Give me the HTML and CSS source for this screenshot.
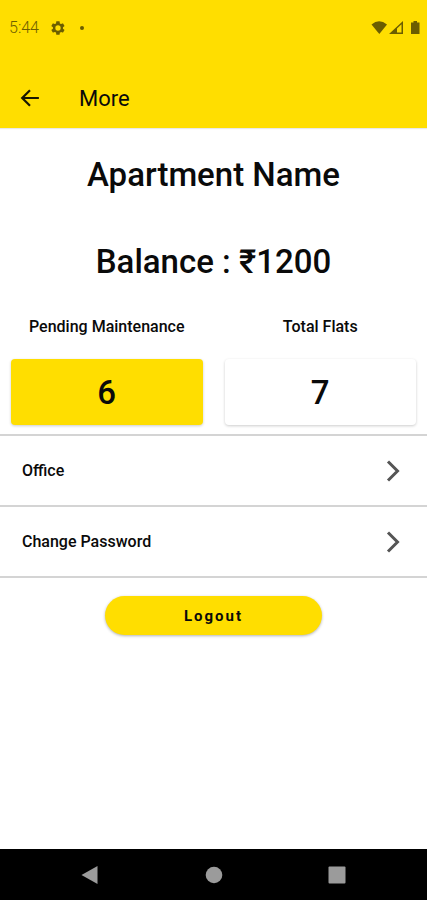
FILE: index.html
```html
<!DOCTYPE html>
<html lang="en">
<head>
<meta charset="utf-8">
<meta name="viewport" content="width=device-width, initial-scale=1">
<title>More</title>
<link rel="stylesheet" href="styles.css">
</head>
<body>
<div class="status">
  <span class="time">5:44</span>
  <svg class="gear" viewBox="0 0 24 24" aria-hidden="true"><path fill-rule="evenodd" d="M19.4 13c0-.3.1-.6.1-1s0-.7-.1-1l2.1-1.600c.2-.2.2-.4.1-.6l-2-3.500c-.1-.2-.4-.3-.6-.2l-2.500 1c-.5-.4-1.100-.7-1.700-1l-.4-2.700c0-.2-.2-.4-.5-.4h-4c-.2 0-.4.2-.5.4L9 5.100c-.6.2-1.200.6-1.700 1l-2.500-1c-.2-.1-.5 0-.6.2l-2 3.500c-.1.200-.1.500.1.600L4.500 11c0 .3-.1.700-.1 1s0 .7.1 1l-2.200 1.600c-.2.200-.2.400-.1.600l2 3.500c.1.200.4.300.6.200l2.500-1c.5.400 1.100.7 1.700 1l.4 2.700c0 .2.2.4.5.4h4c.2 0 .5-.2.5-.4l.4-2.700c.6-.2 1.200-.6 1.700-1l2.500 1c.2.1.5 0 .6-.2l2-3.500c.1-.2.1-.5-.1-.6zM12 16a4 4 0 1 1 0-8 4 4 0 0 1 0 8z"/></svg>
  <span class="dot"></span>
  <svg class="signals" viewBox="0 0 50 16" aria-hidden="true">
    <path d="M.500 4.500Q8-2 16 4.500L8.300 14z"/>
    <path d="M18 14L32 1V14z M26 8.500V12.500H30.500V4.300z" fill-rule="evenodd"/>
    <path d="M40 2.500h2.500V1h3.500v1.500h2.500V14H40z"/>
  </svg>
</div>
<header class="appbar">
  <button class="back" aria-label="Back"><svg viewBox="0 0 18 18" aria-hidden="true"><path d="M17 9H2M9 2L2 9L9 16"/></svg></button>
  <span class="title">More</span>
</header>
<main>
  <h1>Apartment Name</h1>
  <h2>Balance : ₹1200</h2>
  <section class="stats">
    <div class="stat"><h3>Pending Maintenance</h3><div class="card accent">6</div></div>
    <div class="stat"><h3>Total Flats</h3><div class="card">7</div></div>
  </section>
  <nav class="menu">
    <a href="#office">Office<svg viewBox="0 0 14 22" aria-hidden="true"><path d="M2 1.500L11.500 11L2 20.500"/></svg></a>
    <a href="#password">Change Password<svg viewBox="0 0 14 22" aria-hidden="true"><path d="M2 1.500L11.500 11L2 20.500"/></svg></a>
  </nav>
  <button class="logout">Logout</button>
</main>
<footer class="navbar">
  <button aria-label="Back"><svg viewBox="0 0 18 18" aria-hidden="true"><path d="M.500 9L16.500 0V18z"/></svg></button>
  <button aria-label="Home"><svg viewBox="0 0 18 18" aria-hidden="true"><circle cx="9" cy="9" r="8.300"/></svg></button>
  <button aria-label="Recent apps"><svg viewBox="0 0 18 18" aria-hidden="true"><rect x=".500" y=".500" width="17" height="17" rx="1"/></svg></button>
</footer>
</body>
</html>
```
FILE: styles.css
```css
* { box-sizing: border-box; }
body {
  margin: 0;
  min-height: 100vh;
  display: flex;
  flex-direction: column;
  background: #fff;
  color: #0a0a0a;
  font-family: Roboto, "Noto Sans", sans-serif;
}
h1, h2, h3 { margin: 0; font-weight: 500; text-align: center; }
button { border: 0; padding: 0; background: none; color: inherit; font-family: inherit; }
svg { display: block; }

.status {
  display: flex;
  align-items: center;
  height: 55px;
  padding: 0 6px 0 9px;
  background: #ffde00;
  color: #6e6000;
}
.time { font-size: 16px; font-weight: 300; }
.gear { width: 16px; height: 16px; margin-left: 11px; fill: #6b5d00; }
.dot { width: 4px; height: 4px; margin-left: 14px; border-radius: 50%; background: #6b5d00; }
.signals { width: 50px; height: 16px; margin-left: auto; fill: #6b5d00; }

.appbar {
  display: flex;
  align-items: center;
  gap: 39px;
  height: 73px;
  padding: 12px 20px 0;
  background: #ffde00;
  box-shadow: 0 1px 1px #e8e8e8;
}
.back { width: 20px; height: 20px; }
.back svg { width: 20px; height: 20px; fill: none; stroke: #1a1700; stroke-width: 2; }
.title { padding-top: 3px; font-size: 22px; line-height: 24px; }

main { flex: 1; display: flex; flex-direction: column; }
h1, h2 { font-size: 33px; line-height: 40px; }
h1 { margin-top: 27px; }
h2 { margin-top: 47px; }

.stats { display: flex; gap: 22px; padding: 0 11px; margin-top: 35px; }
.stat { flex: 1; }
h3 { font-size: 16px; line-height: 20px; }
.card {
  margin-top: 22px;
  padding: 14px 0 12px;
  border-radius: 4px;
  box-shadow: 0 1px 3px rgba(0, 0, 0, 0.2);
  font-size: 33px;
  font-weight: 500;
  line-height: 40px;
  text-align: center;
}
.accent { background: #ffde00; }

.menu { margin-top: 9px; border-top: 2px solid #d4d4d4; }
.menu a {
  display: flex;
  align-items: center;
  justify-content: space-between;
  height: 71px;
  padding: 0 27px 0 22px;
  border-bottom: 2px solid #d4d4d4;
  color: inherit;
  font-size: 16px;
  font-weight: 500;
  text-decoration: none;
}
.menu svg { width: 14px; height: 22px; fill: none; stroke: #555; stroke-width: 3; }

.logout {
  align-self: center;
  width: 51%;
  height: 39px;
  margin-top: 18px;
  border-radius: 20px;
  background: #ffde00;
  box-shadow: 0 1px 3px rgba(0, 0, 0, 0.3);
  font-size: 15px;
  font-weight: 700;
  letter-spacing: 2px;
}

.navbar {
  display: flex;
  justify-content: space-between;
  height: 51px;
  padding: 0 81px;
  background: #000;
}
.navbar svg { width: 18px; height: 18px; fill: #9b9b9b; }
```
